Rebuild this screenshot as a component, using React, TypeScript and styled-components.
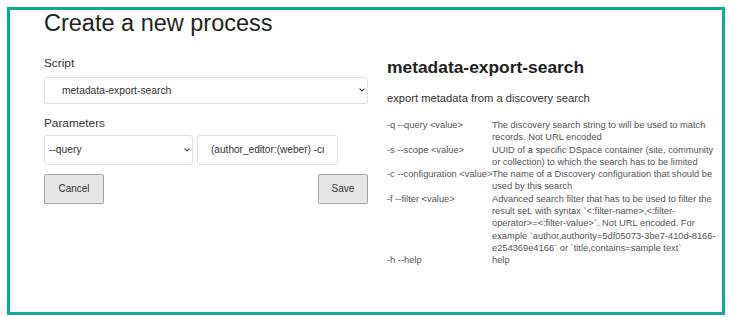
import React from 'react';
import styled, { createGlobalStyle } from 'styled-components';

const GlobalStyle = createGlobalStyle`
    body {
        margin: 0;
        background: #fff;
        font-family: "Liberation Sans", Arial, sans-serif;
        color: #222;
    }
`;

const Frame = styled.div`
    box-sizing: border-box;
    width: 718px;
    height: 308px;
    margin: 7px;
    border: 3px solid #12a89d;
    padding-left: 34px;
    display: flex;
    gap: 19px;
`;

const FormColumn = styled.div`
    width: 324px;
    display: flex;
    flex-direction: column;
`;

const Title = styled.h1`
    margin: 0;
    font-size: 23.5px;
    line-height: 27px;
    font-weight: 400;
    color: #1f1f1f;
`;

const Label = styled.div<{ $top: number; $bottom: number }>`
    margin: ${p => p.$top}px 0 ${p => p.$bottom}px;
    font-size: 11.8px;
    line-height: 14px;
    color: #333;
`;

const SelectWrap = styled.div<{ $width: string }>`
    position: relative;
    width: ${p => p.$width};
    flex: none;
`;

const Select = styled.select<{ $height: number; $pad: number }>`
    appearance: none;
    box-sizing: border-box;
    width: 100%;
    height: ${p => p.$height}px;
    padding: 0 20px 0 ${p => p.$pad}px;
    border: 1px solid #e0e0e0;
    border-radius: 3px;
    background: #fff;
    font-family: "Liberation Sans", Arial, sans-serif;
    font-size: 10.3px;
    color: #333;
    outline: none;
`;

const Chevron = styled.svg`
    position: absolute;
    right: 3px;
    top: 50%;
    margin-top: -2px;
    pointer-events: none;
`;

const ParamRow = styled.div`
    display: flex;
    gap: 4px;
`;

const TextInput = styled.input`
    box-sizing: border-box;
    width: 141px;
    height: 30px;
    padding: 0 13px;
    border: 1px solid #e0e0e0;
    border-radius: 3px;
    font-family: "Liberation Sans", Arial, sans-serif;
    font-size: 10.1px;
    color: #333;
    outline: none;
`;

const ButtonRow = styled.div`
    margin-top: 9px;
    display: flex;
    justify-content: space-between;
`;

const Button = styled.button<{ $width: number }>`
    box-sizing: border-box;
    width: ${p => p.$width}px;
    height: 30px;
    border: 1px solid #a3a3a3;
    border-radius: 2px;
    background: #e6e6e6;
    font-family: "Liberation Sans", Arial, sans-serif;
    font-size: 10px;
    color: #333;
    padding: 0;
`;

const InfoColumn = styled.div`
    padding-top: 47px;
`;

const ScriptName = styled.h2`
    margin: 0;
    font-size: 17.4px;
    line-height: 20px;
    font-weight: 700;
    color: #1e1e1e;
`;

const Summary = styled.p`
    margin: 15px 0 14px;
    font-size: 11.2px;
    line-height: 13px;
    color: #333;
`;

const OptionGrid = styled.div`
    display: grid;
    grid-template-columns: 105px 224px;
    font-size: 9.3px;
    line-height: 12.3px;
    color: #555;
`;

const Flag = styled.div`
    white-space: nowrap;
`;

const Description = styled.div``;

const options = [
    { flag: '-q --query <value>', text: 'The discovery search string to will be used to match records. Not URL encoded' },
    { flag: '-s --scope <value>', text: 'UUID of a specific DSpace container (site, community or collection) to which the search has to be limited' },
    { flag: '-c --configuration <value>', text: 'The name of a Discovery configuration that should be used by this search' },
    {
        flag: '-f --filter <value>',
        text: 'Advanced search filter that has to be used to filter the result set, with syntax `<:filter-name>,<:filter-operator>=<:filter-value>`. Not URL encoded. For example `author,authority=5df05073-3be7-410d-8166-e254369e4166` or `title,contains=sample text`',
    },
    { flag: '-h --help', text: 'help' },
];

const Arrow = () => (
    <Chevron width="6" height="4" viewBox="0 0 6 4">
        <path d="M0.6 0.6 L3 3 L5.4 0.6" fill="none" stroke="#444" strokeWidth="1.1" />
    </Chevron>
);

const App = () => {
    return (
        <>
            <GlobalStyle />
            <Frame>
                <FormColumn>
                    <Title>Create a new process</Title>

                    <Label $top={19} $bottom={6.5}>Script</Label>
                    <SelectWrap $width="100%">
                        <Select $height={27} $pad={17} defaultValue="metadata-export-search">
                            <option>metadata-export-search</option>
                        </Select>
                        <Arrow />
                    </SelectWrap>

                    <Label $top={12.5} $bottom={4.5}>Parameters</Label>
                    <ParamRow>
                        <SelectWrap $width="149px">
                            <Select $height={30} $pad={4} defaultValue="--query">
                                <option>--query</option>
                            </Select>
                            <Arrow />
                        </SelectWrap>
                        <TextInput defaultValue="(author_editor:(weber) -crisitem.foo:bar)" />
                    </ParamRow>

                    <ButtonRow>
                        <Button $width={60}>Cancel</Button>
                        <Button $width={50}>Save</Button>
                    </ButtonRow>
                </FormColumn>

                <InfoColumn>
                    <ScriptName>metadata-export-search</ScriptName>
                    <Summary>export metadata from a discovery search</Summary>
                    <OptionGrid>
                        {options.map(o => (
                            <React.Fragment key={o.flag}>
                                <Flag>{o.flag}</Flag>
                                <Description>{o.text}</Description>
                            </React.Fragment>
                        ))}
                    </OptionGrid>
                </InfoColumn>
            </Frame>
        </>
    );
};

export default App;
